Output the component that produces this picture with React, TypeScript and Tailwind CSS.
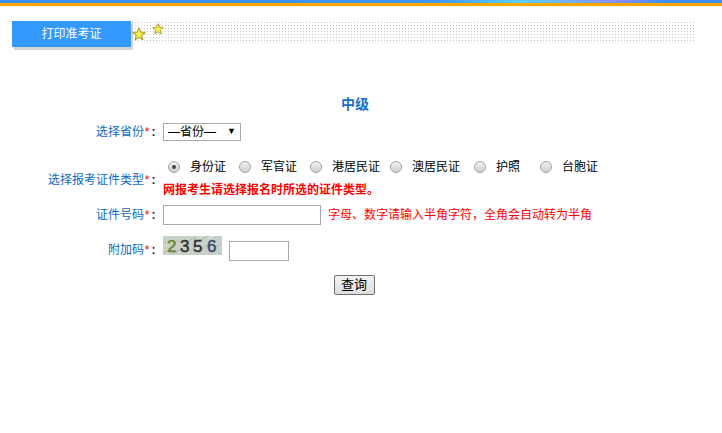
import React from "react";

const font = "font-['Liberation_Sans','Noto_Sans_CJK_SC',sans-serif]";

interface RadioItem {
  label: string;
  gap: string;
  checked?: boolean;
}

const radios: RadioItem[] = [
  { label: "身份证", gap: "ml-[5px]", checked: true },
  { label: "军官证", gap: "ml-[13px]" },
  { label: "港居民证", gap: "ml-[13px]" },
  { label: "澳居民证", gap: "ml-[10px]" },
  { label: "护照", gap: "ml-[14px]" },
  { label: "台胞证", gap: "ml-[20px]" },
];

const Star = ({ size }: { size: number }) => (
  <svg width={size} height={size} viewBox="0 0 24 24">
    <polygon
      points="12,1.5 15,8.6 22.6,9.2 16.8,14.2 18.6,21.8 12,17.7 5.4,21.8 7.2,14.2 1.4,9.2 9,8.6"
      fill="#f7ec4d"
      stroke="#a99c2c"
      strokeWidth="1.8"
      strokeLinejoin="round"
    />
  </svg>
);

const Label = ({ text }: { text: string }) => (
  <div className="w-[157px] shrink-0 text-right text-[12px] leading-[14px] text-[#0b6bbf]">
    {text}
    <span className="inline-block w-[6px] text-center text-[#ff0000]">*</span>
    <span className="inline-block w-[7px] text-center font-bold text-[#222]">:</span>
  </div>
);

const Radio = ({ checked }: { checked?: boolean }) => (
  <span className="flex h-[12px] w-[12px] items-center justify-center rounded-full border border-[#a3a3a3] bg-[linear-gradient(#f0f0f0,#cfcfcf)]">
    {checked && <span className="h-[4px] w-[4px] rounded-full bg-[#444]" />}
  </span>
);

const digits = [
  { d: "2", x: 4, c: "#6d8b2c" },
  { d: "3", x: 17, c: "#2f3131" },
  { d: "5", x: 30, c: "#3a2b2e" },
  { d: "6", x: 44, c: "#3d4a6c" },
];

const Captcha = () => (
  <svg width="59" height="19" viewBox="0 0 59 19" className="block">
    <rect width="59" height="19" fill="#c7d1c8" />
    {Array.from({ length: 80 }).map((_, i) => (
      <rect
        key={i}
        x={(i * 37) % 59}
        y={(i * 13) % 19}
        width="1"
        height="1"
        fill={i % 2 ? "#9fb0a4" : "#e6ece6"}
      />
    ))}
    {digits.map((g) => (
      <text
        key={g.d}
        x={g.x}
        y="16"
        fontSize="17"
        fontFamily="Liberation Sans"
        fill={g.c}
        stroke={g.c}
        strokeWidth="0.5"
      >
        {g.d}
      </text>
    ))}
  </svg>
);

export default function App() {
  return (
    <div className={`w-[722px] h-[433px] bg-white ${font}`}>
      <div className="h-[3px] bg-[linear-gradient(90deg,#3a8ef0_0%,#4094f2_60%,#5ad0f5_72%,#8a8ff0_85%,#3d90f2_92%)]" />
      <div className="h-[3px] bg-[#f7a700]" />
      <div className="h-px bg-[#f3f3f3]" />

      <div className="ml-[12px] mt-[14px] flex items-start">
        <div className="flex h-[26px] w-[119px] items-center justify-center bg-[#3399ff] text-[12px] text-white shadow-[2px_3px_0_#d4d4d4]">
          打印准考证
        </div>
        <div className="relative h-[22px] w-[565px]">
          <svg width="565" height="22" className="block">
            <defs>
              <pattern id="dots" width="3" height="3" patternUnits="userSpaceOnUse">
                <rect x="1" y="1" width="1" height="1" fill="#c6c6c6" />
              </pattern>
            </defs>
            <rect width="565" height="22" fill="url(#dots)" />
          </svg>
          <div className="absolute left-[1px] top-[6px]">
            <Star size={14} />
          </div>
          <div className="absolute left-[21px] top-[2px]">
            <Star size={12} />
          </div>
        </div>
      </div>

      <div className="w-[710px]">
        <div className="mt-[47px] text-center text-[14px] font-bold leading-[20px] text-[#1a6fc4]">
          中级
        </div>

        <div className="mt-[9px] flex items-center">
          <Label text="选择省份" />
          <div className="ml-[6px] flex h-[18px] w-[78px] items-center justify-between border border-[#a9a9a9] px-[4px] text-[12px] text-black">
            <span>—省份—</span>
            <span className="text-[9px]">▼</span>
          </div>
        </div>

        <div className="mt-[17px] flex items-center">
          <div className="pt-[4px]">
            <Label text="选择报考证件类型" />
          </div>
          <div className="ml-[6px]">
            <div className="flex h-[18px] items-center text-[12px] text-black">
              {radios.map((r) => (
                <div key={r.label} className={`flex items-center ${r.gap}`}>
                  <Radio checked={r.checked} />
                  <span className="ml-[10px]">{r.label}</span>
                </div>
              ))}
            </div>
            <div className="mt-[6px] text-[12px] font-bold leading-[16px] text-[#ff0000]">
              网报考生请选择报名时所选的证件类型。
            </div>
          </div>
        </div>

        <div className="mt-[7px] flex items-center">
          <Label text="证件号码" />
          <div className="ml-[6px] h-[20px] w-[158px] border border-[#a9a9a9]" />
          <span className="ml-[7px] text-[12px] text-[#ff0000]">
            字母、数字请输入半角字符，全角会自动转为半角
          </span>
        </div>

        <div className="mt-[11px] flex items-center">
          <div className="pt-[2px]">
            <Label text="附加码" />
          </div>
          <div className="ml-[6px] flex items-start">
            <Captcha />
            <div className="ml-[7px] mt-[5px] h-[20px] w-[60px] border border-[#a9a9a9]" />
          </div>
        </div>

        <div className="mt-[14px] flex justify-center">
          <div className="ml-[-2px] flex h-[20px] w-[41px] items-center justify-center rounded-[2px] border border-[#707070] bg-[linear-gradient(#f4f4f4,#dcdcdc)] text-[13px] text-black">
            查询
          </div>
        </div>
      </div>
    </div>
  );
}
